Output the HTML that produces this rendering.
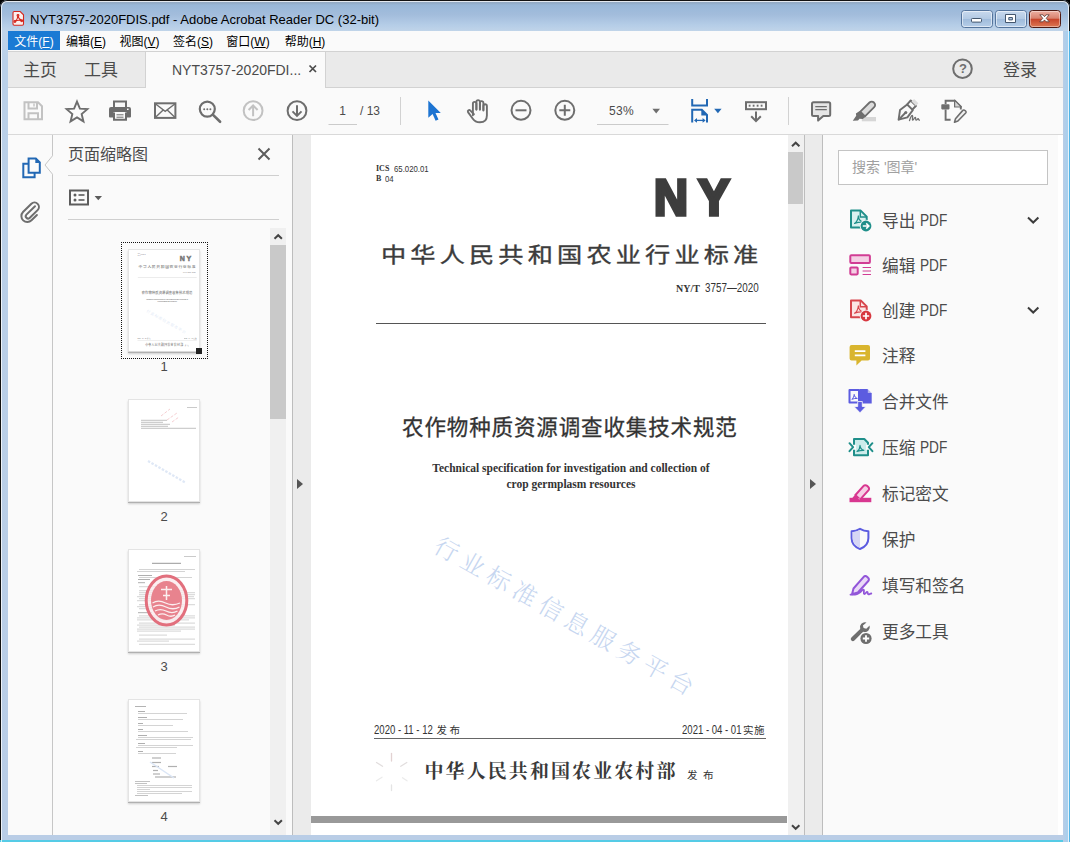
<!DOCTYPE html>
<html lang="zh-CN">
<head>
<meta charset="utf-8">
<title>NYT3757-2020FDIS.pdf - Adobe Acrobat Reader DC (32-bit)</title>
<style>
*{box-sizing:border-box;margin:0;padding:0}
html,body{width:1070px;height:842px;overflow:hidden;background:#000}
body{font-family:"Liberation Sans","Noto Sans CJK SC",sans-serif;color:#4b4b4b;position:relative}
.abs{position:absolute}
#frame{position:absolute;left:0;top:0;width:1070px;height:842px;border-radius:7px 7px 0 0;
 background:linear-gradient(180deg,#8fa6bf 0,#93abc6 3px,#98b7d8 5px,#a3bddc 15px,#b5cde7 25px,#c0d4e9 31px,#bad0e8 60px,#b9cde6 100%);overflow:hidden}
#frame:before{content:"";position:absolute;left:0;top:0;right:0;bottom:0;border:1px solid #111;border-bottom:0;border-radius:7px 7px 0 0}
#frame:after{content:"";position:absolute;left:1px;top:1px;right:1px;bottom:0;border:1px solid rgba(255,255,255,.75);border-bottom:0;border-radius:6px 6px 0 0}
#cy-b{left:0;top:840px;width:1070px;height:2px;background:#55cbe6}
#cy-r{left:1063px;top:31px;width:7px;height:811px;background:linear-gradient(90deg,#b9cde6 0,#a3d0f0 5.500px,#4fb5e6 5.800px)}
#title{left:30px;top:11.5px;font-size:13px;line-height:16px;color:#000;white-space:nowrap;letter-spacing:0}
#client{left:8px;top:31px;width:1055px;height:804px;background:#fafafa;overflow:hidden}
/* menu */
#menubar{left:0;top:0;width:1055px;height:20px;background:#fafafa}
.mi{position:absolute;top:0;height:19px;font-size:12px;line-height:22px;color:#000;white-space:nowrap;text-align:center}
.mi u{text-decoration:underline;text-underline-offset:1px}
/* tab bar */
#tabbar{left:0;top:20px;width:1055px;height:37px;background:#eaeaea;border-top:1px solid #d2d2d2;border-bottom:1px solid #d2d2d2}
#tabactive{left:137px;top:21px;width:181px;height:36px;background:#fafafa;border-left:1px solid #d2d2d2;border-right:1px solid #d2d2d2}
.tabt{position:absolute;font-size:17px;line-height:22px;color:#4b4b4b;white-space:nowrap}
/* toolbar */
#toolbar{left:0;top:57px;width:1055px;height:47px;background:#fafafa;border-bottom:1px solid #d9d9d9}
.tbt{position:absolute;font-size:12px;line-height:16px;color:#4b4b4b;white-space:nowrap}
.sep{position:absolute;width:1px;background:#d0d0d0}
svg{position:absolute;overflow:visible}
/* left strip + thumbs */
#lstrip{left:0;top:104px;width:44px;height:700px;background:#fafafa}
#thumbs{left:45px;top:104px;width:239px;height:700px;background:#fafafa}
#thumbs .hd{position:absolute;left:15px;top:9px;font-size:16px;line-height:22px;color:#4b4b4b;white-space:nowrap}
.hr{position:absolute;height:1px;background:#cfcfcf}
.pg{position:absolute;width:72px;height:103px;background:#fff;box-shadow:inset 0 0 0 1px #e4e4e4,0 1px 0 0 #b0b0b0,0 2px 2px 0 rgba(0,0,0,.18)}
.mini{position:absolute;left:0;top:0;width:477px;height:682px;transform:scale(.151);transform-origin:0 0;opacity:.7}
.mini div{position:absolute;white-space:nowrap;color:#333}
.pgn{position:absolute;width:72px;text-align:center;font-size:13px;line-height:14px;color:#4b4b4b}
#tsb{left:217px;top:93px;width:16px;height:607px;background:#f0f0f0}
#tsb i{position:absolute;left:0;top:17px;width:16px;height:174px;background:#c9c9c9}
#lsplit{left:284px;top:104px;width:19px;height:700px;background:#ebebeb;border-left:1px solid #bdbdbd}
/* doc */
#doc{left:303px;top:104px;width:477px;height:700px;background:#fff;overflow:hidden}
#dsb{left:780px;top:104px;width:16px;height:700px;background:#f0f0f0}
#dsb i{position:absolute;left:0;top:17px;width:15px;height:52px;background:#c9c9c9}
#rsplit{left:796px;top:104px;width:19px;height:700px;background:#ebebeb;border-left:1px solid #bdbdbd;border-right:1px solid #bdbdbd}
#rpanel{left:815px;top:104px;width:240px;height:700px;background:#fafafa}
#rwhite{left:1050px;top:104px;width:5px;height:700px;background:#fff}
#search{left:15px;top:15px;width:210px;height:35px;background:#fff;border:1px solid #c4c4c4;font-size:14px;line-height:33px;padding-left:13px;color:#a0a0a0;white-space:nowrap}
.row{position:absolute;left:59px;font-size:16.7px;line-height:24px;color:#4b4b4b;white-space:nowrap}
.row b{font-weight:normal;font-size:15.700px;display:inline-block;transform:scaleX(.87);transform-origin:0 50%;position:relative;top:-.800px}

#doc div{position:absolute;white-space:nowrap;color:#333}
.sx{transform-origin:0 50%}
.serif{font-family:"Liberation Serif","Noto Serif CJK SC",serif}
.hei{font-family:"Liberation Sans","Noto Sans CJK SC",sans-serif}
.tri{position:absolute;width:0;height:0;border:5px solid transparent}

</style>
</head>
<body>
<div id="frame">
 <div class="abs" id="cy-b"></div>
 <div class="abs" id="cy-r"></div>
 <div class="abs" id="title">NYT3757-2020FDIS.pdf - Adobe Acrobat Reader DC (32-bit)</div>
 <div class="abs" id="client">
  <div class="abs" id="menubar">
   <div class="mi" style="left:0;width:52px;background:#1a7ad4;color:#fff">文件(<u>F</u>)</div>
   <div class="mi" style="left:52px;width:52px">编辑(<u>E</u>)</div>
   <div class="mi" style="left:104px;width:55px">视图(<u>V</u>)</div>
   <div class="mi" style="left:159px;width:52px">签名(<u>S</u>)</div>
   <div class="mi" style="left:211px;width:58px">窗口(<u>W</u>)</div>
   <div class="mi" style="left:269px;width:56px">帮助(<u>H</u>)</div>
  </div>
  <div class="abs" id="tabbar"></div>
  <div class="abs" id="tabactive"></div>
  <div class="tabt" style="left:15px;top:28.5px">主页</div>
  <div class="tabt" style="left:76px;top:28.5px">工具</div>
  <div class="tabt" style="left:164px;top:29px;font-size:14px;line-height:20px">NYT3757-2020FDI...</div>
  <div class="tabt" style="left:995px;top:28.5px">登录</div>
  <div class="abs" id="toolbar"></div>


  <div class="tbt" style="left:324px;top:72.300px;width:21px;text-align:center">1</div>
  <div class="tbt" style="left:352px;top:72.300px">/ 13</div>
  <div class="tbt" style="left:601px;top:72.300px;letter-spacing:.3px">53%</div>
  <div class="abs" style="left:949px;top:30px;width:12px;text-align:center;font-size:13px;line-height:16px;font-weight:bold;color:#6e6e6e">?</div>
  <div class="abs" id="lstrip"></div>
  <div class="abs" id="thumbs">
   <div class="hd">页面缩略图</div>
   <div class="hr" style="left:15px;top:40px;width:211px"></div>
   <div class="hr" style="left:15px;top:84px;width:211px"></div>
   <div class="abs" style="left:68px;top:107px;width:86.500px;height:117px;border:1px dotted #111"></div>
   <div class="pg" style="left:75px;top:114px;overflow:hidden"><div class="mini" id="mini"><div class="serif" style="left:65px;top:29px;font-size:8px;line-height:10px"><b>ICS</b></div>
   <div class="hei sx" style="left:83px;top:28px;font-size:9.5px;line-height:11px;transform:scaleX(.82)">65.020.01</div>
   <div class="serif" style="left:65px;top:39px;font-size:8px;line-height:10px"><b>B</b></div>
   <div class="hei sx" style="left:74px;top:38px;font-size:9.5px;line-height:11px;transform:scaleX(.82)">04</div>
   <div class="hei" style="left:343px;top:31.700px;font-size:50px;line-height:62px;font-weight:bold;letter-spacing:10.900px;color:#3d3d3d;-webkit-text-stroke:3.500px #3d3d3d;transform:scaleX(.94);transform-origin:0 50%">NY</div>
   <div class="hei sx" style="left:70px;top:105px;font-size:21px;line-height:30px;font-weight:normal;-webkit-text-stroke:.350px #3c3c3c;letter-spacing:3.45px;color:#3c3c3c;transform:scaleX(1.2)">中华人民共和国农业行业标准</div>
   <div class="serif" style="left:365px;top:148px;font-size:10px;line-height:12px"><b>NY/T</b></div>
   <div class="hei sx" style="left:394px;top:146px;font-size:12px;line-height:14px;transform:scaleX(.82)">3757—2020</div>
   <div style="left:65px;top:188px;width:390px;height:1px;background:#555"></div>
   <div class="hei" style="left:91px;top:277.300px;font-size:21.500px;line-height:32px;letter-spacing:.880px;color:#333;-webkit-text-stroke:.300px #333">农作物种质资源调查收集技术规范</div>
   <div class="serif" style="left:65px;top:326px;width:390px;text-align:center;font-size:11.5px;line-height:14px;font-weight:bold">Technical specification for investigation and collection of</div>
   <div class="serif" style="left:65px;top:342px;width:390px;text-align:center;font-size:11.5px;line-height:14px;font-weight:bold">crop germplasm resources</div>
   <div class="serif" style="left:124.6px;top:394.4px;font-size:24px;line-height:30px;letter-spacing:6px;color:#c6d6f0;transform:rotate(29.6deg);transform-origin:0 50%;font-weight:300">行业标准信息服务平台</div>
   <div class="hei sx" style="left:63px;top:588px;font-size:13px;line-height:14px;transform:scaleX(.735)">2020 - 11 - 12</div>
   <div class="hei" style="left:125.500px;top:588.200px;font-size:10.5px;line-height:14px;letter-spacing:2.600px">发布</div>
   <div class="hei sx" style="left:371px;top:588px;font-size:13px;line-height:14px;transform:scaleX(.735)">2021 - 04 - 01</div>
   <div class="hei" style="left:432px;top:588.200px;font-size:10.5px;line-height:14px;letter-spacing:.500px">实施</div>
   <div style="left:63px;top:603px;width:392px;height:1px;background:#666"></div>
   <div class="serif" style="left:113.500px;top:622.500px;font-size:19px;line-height:28px;font-weight:bold;letter-spacing:2.080px;color:#3a3a3a">中华人民共和国农业农村部</div>
   <div class="hei" style="left:376px;top:632.500px;font-size:10.5px;line-height:14px;letter-spacing:5.500px">发布</div>
   <div style="left:0;top:681px;width:476px;height:7px;background:#999"></div></div></div>
   <div class="abs" style="left:143px;top:213px;width:6px;height:6px;background:#222"></div>
   <div class="pgn" style="left:75px;top:225px">1</div>
   <div class="pg" id="pg2" style="left:75px;top:264px"></div>
   <div class="pgn" style="left:75px;top:375px">2</div>
   <div class="pg" id="pg3" style="left:75px;top:414px"></div>
   <div class="pgn" style="left:75px;top:525px">3</div>
   <div class="pg" id="pg4" style="left:75px;top:564px"></div>
   <div class="pgn" style="left:75px;top:675px">4</div>
   <div class="abs" id="tsb"><i></i></div>
  </div>
  <div class="abs" id="lsplit"><div class="tri" style="left:4px;top:344px;border-left:6px solid #555;border-right:0"></div></div>
  <div class="abs" id="doc">
   <div class="serif" style="left:65px;top:29px;font-size:8px;line-height:10px"><b>ICS</b></div>
   <div id="ics" class="hei sx" style="left:83px;top:28px;font-size:9.5px;line-height:11px;transform:scaleX(.82)">65.020.01</div>
   <div class="serif" style="left:65px;top:39px;font-size:8px;line-height:10px"><b>B</b></div>
   <div class="hei sx" style="left:74px;top:38px;font-size:9.5px;line-height:11px;transform:scaleX(.82)">04</div>
   <div id="ny" class="hei" style="left:343px;top:31.700px;font-size:50px;line-height:62px;font-weight:bold;letter-spacing:10.900px;color:#3d3d3d;-webkit-text-stroke:3.500px #3d3d3d;transform:scaleX(.94);transform-origin:0 50%">NY</div>
   <div id="std" class="hei sx" style="left:70px;top:105px;font-size:21px;line-height:30px;font-weight:normal;-webkit-text-stroke:.350px #3c3c3c;letter-spacing:3.45px;color:#3c3c3c;transform:scaleX(1.2)">中华人民共和国农业行业标准</div>
   <div id="nyt" class="serif" style="left:365px;top:148px;font-size:10px;line-height:12px"><b>NY/T</b></div>
   <div id="nyn" class="hei sx" style="left:394px;top:146px;font-size:12px;line-height:14px;transform:scaleX(.82)">3757—2020</div>
   <div style="left:65px;top:188px;width:390px;height:1px;background:#555"></div>
   <div id="mt" class="hei" style="left:91px;top:277.300px;font-size:21.500px;line-height:32px;letter-spacing:.880px;color:#333;-webkit-text-stroke:.300px #333">农作物种质资源调查收集技术规范</div>
   <div id="en1" class="serif" style="left:65px;top:326px;width:390px;text-align:center;font-size:11.5px;line-height:14px;font-weight:bold">Technical specification for investigation and collection of</div>
   <div id="en2" class="serif" style="left:65px;top:342px;width:390px;text-align:center;font-size:11.5px;line-height:14px;font-weight:bold">crop germplasm resources</div>
   <div id="wm" class="serif" style="left:124.6px;top:394.4px;font-size:24px;line-height:30px;letter-spacing:6px;color:#c6d6f0;transform:rotate(29.6deg);transform-origin:0 50%;font-weight:300">行业标准信息服务平台</div>
   <div id="d1" class="hei sx" style="left:63px;top:588px;font-size:13px;line-height:14px;transform:scaleX(.735)">2020 - 11 - 12</div>
   <div id="d1c" class="hei" style="left:125.500px;top:588.200px;font-size:10.5px;line-height:14px;letter-spacing:2.600px">发布</div>
   <div id="d2" class="hei sx" style="left:371px;top:588px;font-size:13px;line-height:14px;transform:scaleX(.735)">2021 - 04 - 01</div>
   <div id="d2c" class="hei" style="left:432px;top:588.200px;font-size:10.5px;line-height:14px;letter-spacing:.500px">实施</div>
   <div style="left:63px;top:603px;width:392px;height:1px;background:#666"></div>
   <div id="min" class="serif" style="left:113.500px;top:622.500px;font-size:19px;line-height:28px;font-weight:bold;letter-spacing:2.080px;color:#3a3a3a">中华人民共和国农业农村部</div>
   <div id="fb" class="hei" style="left:376px;top:632.500px;font-size:10.5px;line-height:14px;letter-spacing:5.500px">发布</div>
   <div style="left:0;top:681px;width:476px;height:7px;background:#999"></div>
  </div>
  <div class="abs" id="dsb"><i></i></div>
  <div class="abs" id="rsplit"><div class="tri" style="left:5px;top:344px;border-left:6px solid #555;border-right:0"></div></div>
  <div class="abs" id="rpanel">
   <div class="abs" id="search">搜索 '图章'</div>
   <div class="row" style="top:74.5px">导出 <b>PDF</b></div>
   <div class="row" style="top:119.5px">编辑 <b>PDF</b></div>
   <div class="row" style="top:164.5px">创建 <b>PDF</b></div>
   <div class="row" style="top:209.5px">注释</div>
   <div class="row" style="top:255.5px">合并文件</div>
   <div class="row" style="top:301.5px">压缩 <b>PDF</b></div>
   <div class="row" style="top:348px">标记密文</div>
   <div class="row" style="top:394px">保护</div>
   <div class="row" style="top:439.5px">填写和签名</div>
   <div class="row" style="top:485.5px">更多工具</div>
  </div>
  <div class="abs" id="rwhite"></div>
 </div>

 <svg id="icons" width="1070" height="842" viewBox="0 0 1070 842" style="left:0;top:0" fill="none" stroke-linecap="butt" stroke-linejoin="miter">
  <!-- save -->
  <g stroke="#c2c2c2" stroke-width="2">
   <path d="M24.5 102.2H38l4 4v13H24.5z"/>
   <path d="M28.5 102.2v6.3h8.5v-6.3"/>
   <path d="M28.5 119.2v-6h9.5v6"/>
  </g>
  <path d="M34 103.5v3" stroke="#c2c2c2" stroke-width="1.4"/>
  <!-- star -->
  <path d="M77 101.6l2.9 7 7.5.55-5.75 4.9 1.8 7.35L77 117.4l-6.45 4 1.8-7.35-5.75-4.9 7.5-.55z" stroke="#6e6e6e" stroke-width="1.9" stroke-linejoin="miter"/>
  <!-- printer -->
  <g>
   <path d="M114 107v-5.6h12V107" stroke="#6e6e6e" stroke-width="2"/>
   <path d="M111 107h18a2 2 0 0 1 2 2v7.5a1 1 0 0 1-1 1h-3.5V112h-13v5.5H110a1 1 0 0 1-1-1V109a2 2 0 0 1 2-2z" fill="#6e6e6e"/>
   <path d="M114 112.5v7.3h12v-7.3" stroke="#6e6e6e" stroke-width="2"/>
   <path d="M116.5 114.8h7M116.5 117.2h7" stroke="#6e6e6e" stroke-width="1"/>
   <rect x="127" y="108.6" width="1.6" height="1.4" fill="#fff"/>
  </g>
  <!-- mail -->
  <g stroke="#6e6e6e">
   <rect x="155" y="103.3" width="20.4" height="14.6" stroke-width="2"/>
   <path d="M155.3 103.8l9.9 7.6 9.9-7.6M155.3 117.6l7.6-7.4M175.1 117.6l-7.6-7.4" stroke-width="1.4"/>
  </g>
  <!-- search -->
  <g stroke="#6e6e6e">
   <circle cx="207.3" cy="109.1" r="7.5" stroke-width="2.2"/>
   <path d="M212.8 114.6l7.3 7.2" stroke-width="2.6" stroke-linecap="round"/>
  </g>
  <g fill="#6e6e6e"><circle cx="204.2" cy="109.2" r="1"/><circle cx="207.3" cy="109.2" r="1"/><circle cx="210.4" cy="109.2" r="1"/></g>
  <!-- up -->
  <g stroke="#c2c2c2" stroke-width="2">
   <circle cx="253.1" cy="110.7" r="9.4"/>
   <path d="M253.1 116.2v-10.5M248.6 110l4.5-4.5 4.5 4.5"/>
  </g>
  <!-- down -->
  <g stroke="#6e6e6e" stroke-width="2">
   <circle cx="297" cy="110.7" r="9.4"/>
   <path d="M297 105.2v10.5M292.5 111.4l4.5 4.5 4.5-4.5"/>
  </g>
  <!-- page-no underline + seps -->
  <path d="M328.5 124.5H357M597 124.5H668.5" stroke="#cbcbcb" stroke-width="1"/>
  <path d="M400.5 97V125M788.5 97V125" stroke="#d2d2d2" stroke-width="1"/>
  <!-- arrow cursor -->
  <path d="M428.3 100.4v17.4l4.3-3.7 3 6.6 2.9-1.3-3-6.5h5.3z" fill="#1d74d2"/>
  <!-- hand -->
  <g stroke="#6e6e6e" stroke-width="1.9" stroke-linecap="round" stroke-linejoin="round">
   <path d="M472.9 115.2V103.6a1.75 1.75 0 0 1 3.5 0V109.5"/>
   <path d="M476.4 109.5V101.9a1.75 1.75 0 0 1 3.5 0V109.5"/>
   <path d="M479.9 109.5V102.9a1.75 1.75 0 0 1 3.5 0V110"/>
   <path d="M483.4 110.5V106a1.75 1.75 0 0 1 3.5 0V115.5c0 4.5-3 6.8-7 6.8-3.6 0-5.6-1.2-7.3-3.8l-4.6-6.4c-.8-1.5 1.2-2.7 2.4-1.5l3.5 3.6"/>
  </g>
  <!-- minus / plus -->
  <g stroke="#6e6e6e" stroke-width="2">
   <circle cx="521" cy="110.3" r="9.5"/><path d="M515.5 110.3h11"/>
   <circle cx="564.8" cy="110.3" r="9.5"/><path d="M559.3 110.3h11M564.8 104.8v11"/>
  </g>
  <path d="M652.4 108.8h7.6l-3.8 4.6z" fill="#6e6e6e"/>
  <!-- fit width -->
  <g stroke="#2268b4" stroke-width="2">
   <path d="M692.2 99v6.6h14.8V99"/>
   <path d="M692.2 122.6V109.8h9.6l5.2 5.2v7.6"/>
  </g>
  <path d="M701.3 109.5v6h6z" fill="#2268b4"/>
  <path d="M695.5 120.4h9" stroke="#2268b4" stroke-width="1.3"/>
  <path d="M697 118l-3 2.4 3 2.4zM702.6 118l3 2.4-3 2.4z" fill="#2268b4"/>
  <path d="M714.2 108.8h7.4l-3.7 4.4z" fill="#2268b4"/>
  <!-- keyboard scroll -->
  <g stroke="#6e6e6e" stroke-width="2">
   <rect x="746" y="102.2" width="20" height="7"/>
   <path d="M756 111.5v9.5M751.2 116.3l4.8 4.8 4.8-4.8"/>
  </g>
  <g fill="#6e6e6e"><rect x="748.7" y="104.7" width="1.8" height="2"/><rect x="752.7" y="104.7" width="1.8" height="2"/><rect x="756.7" y="104.7" width="1.8" height="2"/><rect x="760.7" y="104.7" width="1.8" height="2"/></g>
  <!-- comment -->
  <path d="M813.5 102.3h15.2a1.5 1.5 0 0 1 1.5 1.5v10.7a1.5 1.5 0 0 1-1.5 1.5h-5.4l-5.2 4.6v-4.6h-4.6a1.500 1.500 0 0 1-1.500-1.500V103.800a1.500 1.500 0 0 1 1.500-1.500z" fill="#e6e6e6" stroke="#6e6e6e" stroke-width="2" stroke-linejoin="round"/>
  <path d="M815.3 106.6h11.500M815.300 109.700h11.500" stroke="#6e6e6e" stroke-width="1.200"/>
  <!-- highlighter -->
  <rect x="861.800" y="117" width="14.200" height="4.300" fill="#d6d6d6"/>
  <path d="M860.300 111.600l9.200-9.100a3.100 3.100 0 0 1 4.400 0l.300.300a3.100 3.100 0 0 1 0 4.400l-9.200 9.100z" fill="#dcdcdc" stroke="#6e6e6e" stroke-width="1.800" stroke-linejoin="round"/>
  <path d="M859.600 110.900l5.900 5.800-2.700 2.200-3.300-.2-1.500 1.800-5.200.3 3.400-5 -.300-2.400z" fill="#6e6e6e"/>
  <!-- sign pen -->
  <g stroke="#6e6e6e" stroke-width="1.900" stroke-linejoin="round" stroke-linecap="round">
   <path d="M898.600 119.700l1.400-9.600 7.200-5.600 5.600 5.600-5.400 7.300z"/>
   <path d="M899 119.300l6.200-6.300"/>
   <path d="M907.400 104.200l3.300-3.700 5.400 5.300-3.500 3.400"/>
  </g>
  <circle cx="905.800" cy="112.500" r="1.500" fill="#6e6e6e"/>
  <path d="M909.500 120.600c1-3.600 2.400-5.600 3-5 .8.800-.8 4.200.2 4.600 1 .300 1.600-3 2.600-2.800.8.200 0 2.600.8 2.800.8.200 1.400-1.400 2-1.600.6-.1.400 1.300 1.300 1.500" stroke="#6e6e6e" stroke-width="1.300" fill="none" stroke-linecap="round"/>
  <path d="M911.500 101.500l4.500 4.500 2.400-2.700-4.300-4.300z" fill="#dedede"/>
  <!-- doc pen -->
  <g stroke="#6e6e6e" stroke-width="1.900">
   <path d="M945.600 104v-3.300h9.200l6 6v2.800M945.600 109.500v10.300h5"/>
   <path d="M955.500 118.700l7.300-8.300a1.400 1.400 0 0 1 2-.100l.800.700a1.400 1.400 0 0 1 .100 2l-7.800 8-3.400 1.200z" fill="#f0f0f0" stroke-width="1.600" stroke-linejoin="round"/>
  </g>
  <rect x="941.300" y="104.200" width="8.200" height="5.200" rx=".8" fill="#6e6e6e"/>
  <path d="M954.600 100.200l6.800 6.800h-6.800z" fill="#d4d4d4" stroke="#6e6e6e" stroke-width="1.200" stroke-linejoin="round"/>
  <!-- help -->
  <circle cx="962.500" cy="68.700" r="9.300" stroke="#6e6e6e" stroke-width="2"/>
  <!-- caption buttons -->
  <defs>
   <linearGradient id="gb" x1="0" y1="0" x2="0" y2="1"><stop offset="0" stop-color="#c9daee"/><stop offset=".48" stop-color="#b3cae4"/><stop offset=".5" stop-color="#9fbbdb"/><stop offset="1" stop-color="#b7cfe9"/></linearGradient>
   <linearGradient id="gr" x1="0" y1="0" x2="0" y2="1"><stop offset="0" stop-color="#eeb2a5"/><stop offset=".46" stop-color="#d9826f"/><stop offset=".5" stop-color="#c7432a"/><stop offset="1" stop-color="#dd7a55"/></linearGradient>
  </defs>
  <rect x="961.5" y="10.500" width="31" height="17" rx="3" fill="url(#gb)" stroke="#54749c"/>
  <rect x="962.500" y="11.500" width="29" height="15" rx="2" stroke="rgba(255,255,255,.55)"/>
  <rect x="995.500" y="10.500" width="31" height="17" rx="3" fill="url(#gb)" stroke="#54749c"/>
  <rect x="996.500" y="11.500" width="29" height="15" rx="2" stroke="rgba(255,255,255,.55)"/>
  <rect x="1029.500" y="10.500" width="31" height="17" rx="3" fill="url(#gr)" stroke="#4e1a14"/>
  <rect x="1030.500" y="11.500" width="29" height="15" rx="2" stroke="rgba(255,255,255,.4)"/>
  <rect x="971.500" y="18.500" width="10" height="3.600" rx=".8" fill="#fff" stroke="#44576e" stroke-width="1"/>
  <path d="M1005.500 14.500h10v8h-10zM1008.800 17.500h3.600v2.400h-3.600z" fill="#fff" fill-rule="evenodd" stroke="#44576e" stroke-width="1"/>
  <path d="M1039.800 14.800l3.200 0 1.500 1.900 1.500-1.900 3.200 0-3 3.500 3.100 3.500-3.300 0-1.500-1.900-1.500 1.900-3.300 0 3.100-3.500z" fill="#fff" stroke="#5a3a35" stroke-width=".8" stroke-linejoin="round"/>
  <!-- pdf title icon -->
  <path d="M14.200 11.500h6l3.300 3.300v9.200a1.200 1.200 0 0 1-1.200 1.200h-8.100a1.200 1.200 0 0 1-1.200-1.200V12.700a1.200 1.200 0 0 1 1.200-1.200z" fill="#fbefed" stroke="#d5281f" stroke-width="1.100"/>
  <g stroke="#d5281f" stroke-width="1.100" fill="none" stroke-linecap="round">
   <path d="M18 15.800c-.2 2.200-1.400 4.600-3 5.600M18 15.800c.3 2.300 1.700 3.900 3.600 4.800M15 21.200c2-1 4.500-1.200 6.600-.6"/>
   <circle cx="18" cy="15.500" r=".9"/><circle cx="14.900" cy="21.500" r=".9"/><circle cx="21.700" cy="20.800" r=".9"/>
  </g>
  <!-- tab close x -->
  <path d="M309.500 65.500l6.500 6.500M316 65.500l-6.500 6.500" stroke="#4b4b4b" stroke-width="1.700"/>
  <!-- notch -->
  <path d="M53 155.500L45 165l8 9.500z" fill="#fafafa"/>
  <path d="M52.500 135V155.800L45 165l7.500 9.200V835" stroke="#c6c6c6" stroke-width="1"/>
  <!-- pages icon -->
  <g stroke="#2268b4" stroke-width="2">
   <path d="M28.600 158.400h7.200l4 4v10.400H28.600z" fill="#fafafa"/>
   <path d="M28.600 163.700h-5.300v13.500h11.300v-4.200"/>
  </g>
  <path d="M35.300 158v5h5z" fill="#2268b4"/>
  <!-- paperclip -->
  <path d="M35 208.300l-8.600 8.300a2.300 2.300 0 0 0 3.200 3.300l8-7.800a4.400 4.400 0 0 0-6.200-6.300l-8.400 8.200a6 6 0 0 0 .2 8.400 6 6 0 0 0 8.300-.1l5.400-5.300" stroke="#6e6e6e" stroke-width="2" stroke-linecap="round" transform="translate(0,-2)"/>
  <!-- panel close -->
  <path d="M258.500 148.500l11 11M269.500 148.500l-11 11" stroke="#5c5c5c" stroke-width="2"/>
  <!-- options -->
  <rect x="70" y="190.500" width="18" height="14" stroke="#5c5c5c" stroke-width="2"/>
  <g fill="#5c5c5c"><circle cx="75" cy="195" r="1.500"/><circle cx="75" cy="200" r="1.500"/><rect x="78.500" y="194.200" width="6" height="1.600"/><rect x="78.500" y="199.200" width="6" height="1.600"/></g>
  <path d="M94.600 196h7.400l-3.700 4.300z" fill="#5c5c5c"/>
  <!-- right panel icons -->
  <!-- export -->
  <path d="M851 210.600h9.700l6 6v10.800H851z" fill="#d9f1f0" stroke="#1f8f8a" stroke-width="2" stroke-linejoin="round"/>
  <path d="M860.300 210.600v6.400h6.400" stroke="#1f8f8a" stroke-width="1.500"/>
  <path d="M854.500 223.500c2.200-1.500 3.600-4.600 3.800-7.600.3 3.200 2.200 5.600 4.800 6.200-3-.1-6 .3-8.600 1.400z" stroke="#1f8f8a" stroke-width="1.100" stroke-linejoin="round"/>
  <circle cx="866" cy="226" r="6.300" fill="#fafafa"/>
  <circle cx="866" cy="226" r="5.400" fill="#1f8f8a"/>
  <path d="M862.800 226h5.600M866.200 223.400l2.700 2.600-2.700 2.600" stroke="#fff" stroke-width="1.500"/>
  <!-- edit -->
  <rect x="850.300" y="255.200" width="19.600" height="7.800" rx="1" fill="#f4cfe4" stroke="#d13d94" stroke-width="2"/>
  <rect x="850.300" y="267.400" width="7.400" height="7" rx=".8" fill="#f4cfe4" stroke="#d13d94" stroke-width="2"/>
  <path d="M862.600 267.500h8.400M862.600 271h8.400M862.600 274.500h8.400" stroke="#d13d94" stroke-width="1.200"/>
  <!-- create -->
  <path d="M851 300.400h9.700l6 6v10.800H851z" fill="#fbe4e4" stroke="#d7454c" stroke-width="2" stroke-linejoin="round"/>
  <path d="M860.300 300.400v6.400h6.400" stroke="#d7454c" stroke-width="1.500"/>
  <path d="M854.500 313.300c2.200-1.500 3.600-4.600 3.800-7.600.3 3.200 2.200 5.600 4.800 6.200-3-.1-6 .3-8.600 1.400z" stroke="#d7454c" stroke-width="1.100" stroke-linejoin="round"/>
  <circle cx="866" cy="316" r="6.300" fill="#fafafa"/>
  <circle cx="866" cy="316" r="5.400" fill="#d7373f"/>
  <path d="M862.800 316h6.400M866 312.800v6.400" stroke="#fff" stroke-width="1.700"/>
  <!-- comment -->
  <path d="M851.600 345h16.400a2 2 0 0 1 2 2v11.600a2 2 0 0 1-2 2h-6.400l-5.200 5v-5h-4.800a2 2 0 0 1-2-2V347a2 2 0 0 1 2-2z" fill="#d9b52e"/>
  <path d="M854.800 351.200h10.600M854.800 355.400h10.600" stroke="#fff" stroke-width="1.700"/>
  <!-- combine -->
  <path d="M849.500 390h9.500v12.500h-9.500z" fill="#fafafa" stroke="#5c5ce0" stroke-width="2" stroke-linejoin="round"/>
  <path d="M859.600 389h7.900l4.200 4.200v10.200h-12.100z" fill="#5c5ce0"/>
  <path d="M867.800 389v3.900h3.900z" fill="#fafafa" opacity=".55"/>
  <path d="M851.800 399.300c1.400-1 2.300-3 2.400-4.900.2 2 1.400 3.600 3.100 4-1.900-.1-3.800.2-5.500.9z" stroke="#5c5ce0" stroke-width="1" stroke-linejoin="round"/>
  <path d="M857.700 401.500h4.600v5h3.700l-6 6.300-6-6.300h3.700z" fill="#5c5ce0" stroke="#fafafa" stroke-width=".8"/>
  <!-- compress -->
  <path d="M854 439h10.300l3.700 3.700v12.600H854z" fill="#cdeceb" stroke="#1f8f8a" stroke-width="2" stroke-linejoin="round"/>
  <path d="M857 451.500c1.800-1.200 2.900-3.700 3-6.100.3 2.600 1.800 4.500 3.900 5-2.400-.1-4.800.3-6.900 1.100z" stroke="#1f8f8a" stroke-width="1.100" stroke-linejoin="round"/>
  <path d="M852 447.200h4v0M870 447.200h-4" stroke="#fafafa" stroke-width="5"/>
  <path d="M849.500 443.200l3.600 4-3.600 4M872.400 443.200l-3.600 4 3.600 4" stroke="#1f8f8a" stroke-width="2" stroke-linecap="round" stroke-linejoin="round"/>
  <!-- redact -->
  <path d="M849.500 497.800h21.800v4.400h-21.800z" fill="#d83790"/>
  <path d="M855 495.500l8.600-9.600a2.400 2.400 0 0 1 3.400-.1l1.300 1.200a2.400 2.400 0 0 1 .1 3.400l-8.600 9.500" fill="#f6cfe5" stroke="#d83790" stroke-width="2" stroke-linejoin="round"/>
  <path d="M855.500 494l5 4.500-8.500 0z" fill="#d83790"/>
  <!-- protect -->
  <path d="M860 528.800c2.800 1.600 5.600 2.300 8.400 2.400v6.800c0 5.400-3.600 9.200-8.400 11-4.800-1.800-8.400-5.600-8.400-11v-6.800c2.800-.1 5.600-.8 8.400-2.400z" fill="#fafafa" stroke="#5c5ce0" stroke-width="2" stroke-linejoin="round"/>
  <path d="M860 530c-2.400 1.300-4.900 2-7.400 2.100v5.900c0 4.800 3.100 8.300 7.400 9.900z" fill="#d6d6f5"/>
  <!-- fill sign -->
  <path d="M853.500 588.500l10.200-11.600a2.300 2.300 0 0 1 3.300-.2l1.100 1a2.300 2.300 0 0 1 .2 3.300l-10.400 11.500-5.900 1.800z" fill="#ead9f7" stroke="#9256d9" stroke-width="2" stroke-linejoin="round"/>
  <path d="M850.500 594.600c3.500.3 7.500-.3 9.500-2.200 1.200-1.100 2.700-3.500 3.700-2.700 1 .9-.7 3.900.5 4.300 1.200.4 1.900-2.200 3-2.100.9.100.3 2.300 1.300 2.500 1 .100 1.500-.9 2.800-.9" stroke="#9256d9" stroke-width="1.800" stroke-linecap="round" stroke-linejoin="round"/>
  <!-- more tools -->
  <path d="M866.500 622.500a5 5 0 0 0-6.300 6.400l-8.800 8.600a2.100 2.100 0 0 0 3 3l8.700-8.700a5 5 0 0 0 6.500-6.200l-3.300 3.200-2.700-.7-.700-2.700z" fill="#6e6e6e"/>
  <circle cx="866" cy="638.500" r="6.600" fill="#fafafa"/>
  <circle cx="866" cy="638.500" r="5.600" fill="#6e6e6e"/>
  <path d="M862.800 638.500h6.400M866 635.300v6.400" stroke="#fff" stroke-width="1.800"/>
  <!-- chevrons -->
  <path d="M1028 217.500l5.200 5 5.200-5M1028 307.500l5.200 5 5.200-5" stroke="#3c3c3c" stroke-width="2" stroke-linejoin="miter"/>
  <!-- scroll arrows -->
  <g stroke="#444" stroke-width="2">
   <path d="M274.500 238.800l3.700-3.600 3.700 3.600"/>
   <path d="M274.500 820.200l3.700 3.600 3.700-3.600"/>
   <path d="M792 146.300l3.700-3.600 3.700 3.600"/>
   <path d="M792 825.200l3.700 3.600 3.700-3.600"/>
  </g>
  <!-- thumbnails -->
  <path d="M187.0 407.5H197.0" stroke="#bdbdbd" stroke-width="0.8"/>
  <path d="M141.0 420.3H167.0" stroke="#a8a8a8" stroke-width="0.7"/>
  <path d="M141.0 422.3H163.0" stroke="#a8a8a8" stroke-width="0.7"/>
  <path d="M141.0 424.3H170.0" stroke="#a8a8a8" stroke-width="0.7"/>
  <path d="M141.0 426.3H168.0" stroke="#a8a8a8" stroke-width="0.7"/>
  <path d="M141.0 428.3H196.0" stroke="#a8a8a8" stroke-width="0.7"/>
  <g stroke="#f3c3c7" stroke-width="1" opacity=".8"><path d="M161 416l9-7M167 420l10-7M172 422l7-5" stroke-dasharray="3 1.500"/></g>
  <path d="M148 461l38 22" stroke="#dfe8f6" stroke-width="2.200" stroke-dasharray="2.500 1.500"/>
  <path d="M184.0 556.5H196.0" stroke="#bdbdbd" stroke-width="0.8"/>
  <path d="M152.0 563.3H181.0" stroke="#8c8c8c" stroke-width="0.9"/>
  <path d="M139.0 569.5H195.0" stroke="#c2c2c2" stroke-width="0.7"/>
  <path d="M137.0 571.5H185.0" stroke="#c2c2c2" stroke-width="0.7"/>
  <path d="M138.0 575.5H152.0" stroke="#9a9a9a" stroke-width="0.8"/>
  <path d="M139.0 577.5H192.0" stroke="#c2c2c2" stroke-width="0.7"/>
  <path d="M138.0 579.5H150.0" stroke="#9a9a9a" stroke-width="0.8"/>
  <path d="M138.0 582.7H145.0" stroke="#9a9a9a" stroke-width="0.8"/>
  <path d="M139.0 586.7H174.0" stroke="#c2c2c2" stroke-width="0.7"/>
  <path d="M139.0 590.7H185.0" stroke="#c2c2c2" stroke-width="0.7"/>
  <path d="M139.0 592.7H195.0" stroke="#c2c2c2" stroke-width="0.7"/>
  <path d="M139.0 594.7H195.0" stroke="#c2c2c2" stroke-width="0.7"/>
  <path d="M137.0 596.7H194.0" stroke="#c2c2c2" stroke-width="0.7"/>
  <path d="M139.0 598.7H195.0" stroke="#c2c2c2" stroke-width="0.7"/>
  <path d="M137.0 600.7H166.0" stroke="#c2c2c2" stroke-width="0.7"/>
  <path d="M139.0 604.7H195.0" stroke="#c2c2c2" stroke-width="0.7"/>
  <path d="M137.0 606.7H183.0" stroke="#c2c2c2" stroke-width="0.7"/>
  <path d="M139.0 608.7H163.0" stroke="#c2c2c2" stroke-width="0.7"/>
  <path d="M138.0 612.7H152.0" stroke="#9a9a9a" stroke-width="0.8"/>
  <path d="M139.0 615.9H195.0" stroke="#c2c2c2" stroke-width="0.7"/>
  <path d="M137.0 617.9H195.0" stroke="#c2c2c2" stroke-width="0.7"/>
  <path d="M137.0 619.9H189.0" stroke="#c2c2c2" stroke-width="0.7"/>
  <path d="M139.0 623.1H195.0" stroke="#c2c2c2" stroke-width="0.7"/>
  <path d="M137.0 625.1H175.0" stroke="#c2c2c2" stroke-width="0.7"/>
  <path d="M139.0 627.1H195.0" stroke="#c2c2c2" stroke-width="0.7"/>
  <path d="M137.0 629.1H195.0" stroke="#c2c2c2" stroke-width="0.7"/>
  <path d="M137.0 631.1H181.0" stroke="#c2c2c2" stroke-width="0.7"/>
  <path d="M139.0 635.1H167.0" stroke="#c2c2c2" stroke-width="0.7"/>
  <path d="M139.0 639.1H195.0" stroke="#c2c2c2" stroke-width="0.7"/>
  <path d="M137.0 641.1H169.0" stroke="#c2c2c2" stroke-width="0.7"/>
  <path d="M139.0 644.3H195.0" stroke="#c2c2c2" stroke-width="0.7"/>
  <g><ellipse cx="166.5" cy="600.5" rx="20.3" ry="24.500" fill="#fbeaec" fill-opacity=".75" stroke="#e26f7d" stroke-width="3"/><ellipse cx="166.500" cy="600.500" rx="15.500" ry="19.500" fill="#e8838e"/><path d="M152.500 603c4-2.500 8-2.500 13 0s9 2.500 14.500 0M153 607c4-2.500 8-2.500 13 0s9 2.500 13.500 0M155 611c3.500-2 7-2 11 0s8 2 11.500 0M158 615c3-1.600 5.600-1.600 8.500 0s6 1.600 8.500 0" stroke="#fbeff0" stroke-width="1.300" fill="none"/><path d="M166.500 586v14M161 589.500h11M163 595.500h7" stroke="#fbeff0" stroke-width="1.500"/></g>
  <path d="M135.0 706.5H146.0" stroke="#a0a0a0" stroke-width="0.8"/>
  <path d="M138.0 711.5H145.0" stroke="#9a9a9a" stroke-width="0.8"/>
  <path d="M138.0 713.5H187.0" stroke="#c2c2c2" stroke-width="0.7"/>
  <path d="M138.0 717.5H147.0" stroke="#9a9a9a" stroke-width="0.8"/>
  <path d="M138.0 719.5H183.0" stroke="#c2c2c2" stroke-width="0.7"/>
  <path d="M138.0 723.5H143.0" stroke="#9a9a9a" stroke-width="0.8"/>
  <path d="M138.0 725.5H173.0" stroke="#c2c2c2" stroke-width="0.7"/>
  <path d="M138.0 729.5H143.0" stroke="#9a9a9a" stroke-width="0.8"/>
  <path d="M138.0 731.5H188.0" stroke="#c2c2c2" stroke-width="0.7"/>
  <path d="M138.0 735.5H147.0" stroke="#9a9a9a" stroke-width="0.8"/>
  <path d="M138.0 737.5H193.0" stroke="#c2c2c2" stroke-width="0.7"/>
  <path d="M136.0 739.5H191.0" stroke="#c2c2c2" stroke-width="0.7"/>
  <path d="M138.0 743.5H145.0" stroke="#9a9a9a" stroke-width="0.8"/>
  <path d="M138.0 745.5H193.0" stroke="#c2c2c2" stroke-width="0.7"/>
  <path d="M136.0 747.5H177.0" stroke="#c2c2c2" stroke-width="0.7"/>
  <path d="M138.0 751.5H143.0" stroke="#9a9a9a" stroke-width="0.8"/>
  <path d="M138.0 753.5H176.0" stroke="#c2c2c2" stroke-width="0.7"/>
  <path d="M152.0 758.0H161.0" stroke="#b0b0b0" stroke-width="1.2"/>
  <path d="M152.0 762.5H161.0" stroke="#b0b0b0" stroke-width="1.2"/>
  <path d="M152.0 766.5H159.0" stroke="#b0b0b0" stroke-width="1.2"/>
  <path d="M168.0 766.5H177.0" stroke="#b0b0b0" stroke-width="1.2"/>
  <path d="M153.0 770.5H158.0" stroke="#b0b0b0" stroke-width="1.2"/>
  <path d="M153.0 774.0H160.0" stroke="#b0b0b0" stroke-width="1.2"/>
  <path d="M155.0 777.0H176.0" stroke="#b0b0b0" stroke-width="1.2"/>
  <path d="M150 762l24 16" stroke="#dbe6f6" stroke-width="1.500"/>
  <path d="M135.0 781.5H150.0" stroke="#a8a8a8" stroke-width="0.7"/>
  <path d="M135.0 783.5H147.0" stroke="#a8a8a8" stroke-width="0.7"/>
  <path d="M137.0 785.5H192.0" stroke="#c2c2c2" stroke-width="0.7"/>
  <path d="M137.0 787.5H192.0" stroke="#c2c2c2" stroke-width="0.7"/>
  <path d="M137.0 789.5H150.0" stroke="#c2c2c2" stroke-width="0.7"/>
  <path d="M137.0 791.5H192.0" stroke="#c2c2c2" stroke-width="0.7"/>
  <path d="M137.0 793.5H182.0" stroke="#c2c2c2" stroke-width="0.7"/>
  <path d="M135.0 795.5H148.0" stroke="#a8a8a8" stroke-width="0.7"/>
  <!-- emblem -->
  <g stroke-width="1.300" stroke-linecap="round">
   <path d="M391.500 753.500v7.500" stroke="#e2d2d2"/>
   <path d="M376.500 762.500l6 3.800M406.800 762.500l-6 3.800" stroke="#e2dede"/>
   <path d="M376.500 780.800l5.500-3.600M407 780.800l-4.500-3" stroke="#ebebeb"/>
   <path d="M391.500 785v5.500" stroke="#e4e4e4"/>
  </g>
 </svg>
</div>
</body>
</html>
